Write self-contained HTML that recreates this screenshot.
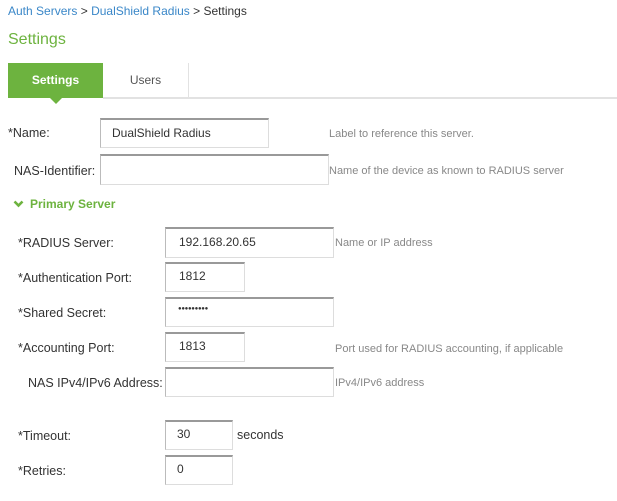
<!DOCTYPE html>
<html><head><meta charset="utf-8"><style>
body{margin:0;width:617px;height:501px;background:#fff;font-family:"Liberation Sans",Arial,sans-serif;position:relative;overflow:hidden;color:#333}
.a{position:absolute;white-space:nowrap}
.lbl{font-size:12.5px;color:#333}
.help{font-size:11px;color:#888}
.in{position:absolute;box-sizing:border-box;border:1px solid #ddd;border-top:2px solid #999;border-left:1px solid #bbb;background:#fff;font-size:12px;color:#333;padding:6px 0 0 26px}
</style></head><body>
<div class="a" style="left:8px;top:4px;font-size:12px;color:#333"><span style="color:#3a87c8">Auth Servers</span> &gt; <span style="color:#3a87c8">DualShield Radius</span> &gt; Settings</div>
<div class="a" style="left:8px;top:31px;font-size:16px;color:#6db33f">Settings</div>
<div class="a" style="left:8px;top:63px;width:95px;height:35px;background:#6db33f;color:#fff;font-size:12px;font-weight:bold;text-align:center;line-height:35px">Settings</div>
<div class="a" style="left:50px;top:98px;width:0;height:0;border-left:6px solid transparent;border-right:6px solid transparent;border-top:6px solid #6db33f"></div>
<div class="a" style="left:103px;top:63px;width:85px;height:35px;color:#555;font-size:12px;text-align:center;line-height:35px">Users</div>
<div class="a" style="left:188px;top:63px;width:1px;height:35px;background:#e2e2e2"></div>
<div class="a" style="left:103px;top:97px;width:514px;height:2px;background:#e2e2e2"></div>

<div class="a lbl" style="left:8px;top:126px">*Name:</div>
<div class="in" style="left:100px;top:118px;width:169px;height:30px;padding-left:11px">DualShield Radius</div>
<div class="a help" style="left:329px;top:128px">Label to reference this server.</div>

<div class="a lbl" style="left:14px;top:164px">NAS-Identifier:</div>
<div class="in" style="left:100px;top:154px;width:229px;height:31px"></div>
<div class="a help" style="left:329px;top:165px">Name of the device as known to RADIUS server</div>

<svg class="a" style="left:13px;top:200px" width="11" height="8" viewBox="0 0 11 8"><path d="M1.5 1.5 L5.5 5.5 L9.5 1.5" stroke="#6db33f" stroke-width="2.6" fill="none"/></svg>
<div class="a" style="left:30px;top:197px;font-size:12px;font-weight:bold;color:#6db33f">Primary Server</div>

<div class="a lbl" style="left:18px;top:236px">*RADIUS Server:</div>
<div class="in" style="left:165px;top:227px;width:169px;height:31px;padding-left:13px">192.168.20.65</div>
<div class="a help" style="left:335px;top:237px">Name or IP address</div>

<div class="a lbl" style="left:18px;top:271px">*Authentication Port:</div>
<div class="in" style="left:165px;top:262px;width:80px;height:30px;padding-left:13px;padding-top:5px">1812</div>

<div class="a lbl" style="left:18px;top:306px">*Shared Secret:</div>
<div class="in" style="left:165px;top:297px;width:169px;height:30px;padding-left:12px;padding-top:7px;font-size:6px;letter-spacing:-0.3px">●●●●●●●●●</div>

<div class="a lbl" style="left:18px;top:341px">*Accounting Port:</div>
<div class="in" style="left:165px;top:332px;width:80px;height:30px;padding-left:13px;padding-top:5px">1813</div>
<div class="a help" style="left:335px;top:343px">Port used for RADIUS accounting, if applicable</div>

<div class="a lbl" style="left:28px;top:376px">NAS IPv4/IPv6 Address:</div>
<div class="in" style="left:165px;top:367px;width:169px;height:30px"></div>
<div class="a help" style="left:335px;top:377px">IPv4/IPv6 address</div>

<div class="a lbl" style="left:18px;top:429px">*Timeout:</div>
<div class="in" style="left:165px;top:420px;width:68px;height:30px;padding-left:11px;padding-top:5px">30</div>
<div class="a lbl" style="left:237px;top:428px">seconds</div>

<div class="a lbl" style="left:18px;top:464px">*Retries:</div>
<div class="in" style="left:165px;top:455px;width:68px;height:30px;padding-left:11px;padding-top:5px">0</div>
</body></html>
